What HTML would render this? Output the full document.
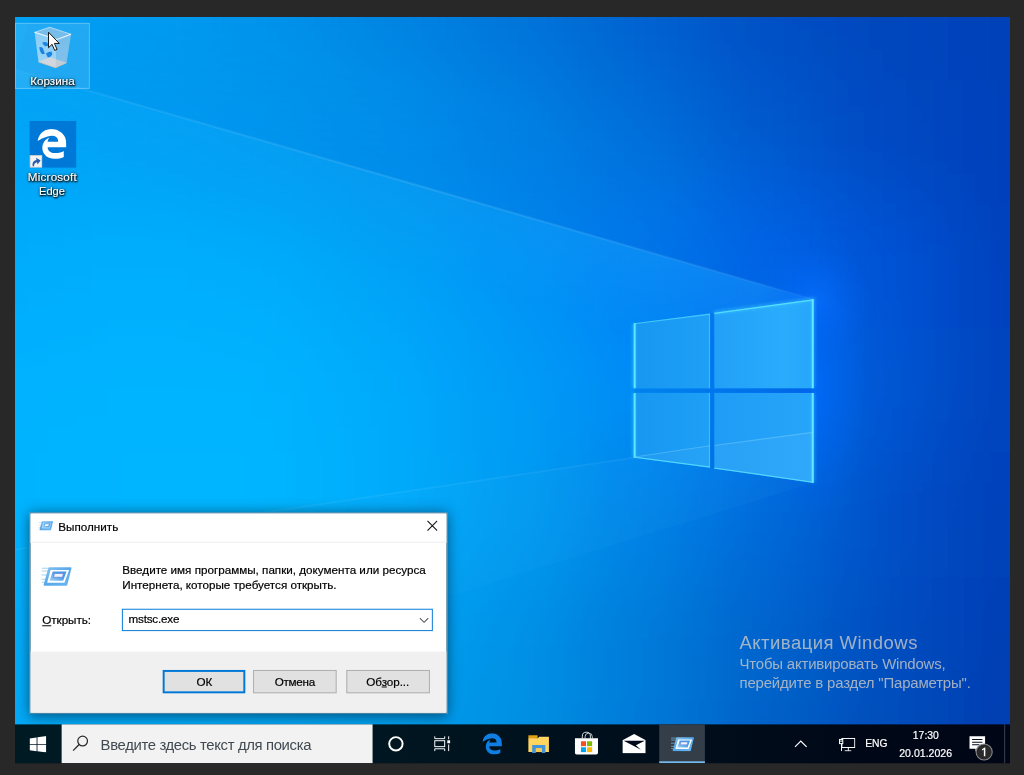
<!DOCTYPE html>
<html lang="ru">
<head>
<meta charset="utf-8">
<title>Desktop</title>
<style>
*{box-sizing:border-box;margin:0;padding:0}
html,body{width:1024px;height:775px;overflow:hidden;background:#282828}
body{font-family:"Liberation Sans",sans-serif;font-size:12px;color:#000;position:relative}
#screen{position:absolute;left:14.5px;top:17px;width:1024px;height:767.74px;transform:scale(0.97168);transform-origin:0 0;overflow:hidden;background:#000a18}
#wall{position:absolute;left:0;top:0;width:1024px;height:768px;clip-path:inset(0 0 38px 0)}
.abs{position:absolute}
.nw{white-space:nowrap}
/* desktop icons */
.sel{position:absolute;left:-0.2px;top:5.6px;width:77.3px;height:68.4px;background:rgba(255,255,255,.13);border:1px solid rgba(255,255,255,.28)}
.dlabel{-webkit-text-stroke:.15px #fff;position:absolute;left:-11.5px;width:100px;text-align:center;color:#fff;font-size:12px;line-height:15px;text-shadow:0 1px 2px rgba(0,0,0,.95),1px 1px 2px rgba(0,0,0,.9),0 0 3px rgba(0,0,0,.7)}
/* watermark */
.wm{position:absolute;left:745.6px;color:rgba(198,198,198,.82);white-space:nowrap}
/* dialog */
#dlg{-webkit-text-stroke:.2px #000;position:absolute;left:14.6px;top:509.5px;width:430px;height:207px;background:#fff;border:1px solid #1d5f86;box-shadow:0 0 14px 1px rgba(0,0,0,.38),0 4px 10px rgba(0,0,0,.18)}
#dlg .tbar{position:absolute;left:0;top:0;width:428px;height:30px;background:#fff;border-bottom:1px solid #ececec}
#dlg .foot{position:absolute;left:0;top:142.5px;width:428px;height:62.5px;background:#f0f0f0}
.btn{position:absolute;top:161.5px;width:86px;height:23.5px;background:#e1e1e1;border:1px solid #adadad;text-align:center;line-height:22.4px;font-size:12px}
.btn.def{border:2px solid #0078d7;line-height:20.4px}
/* taskbar */
#tb{position:absolute;left:0;top:728px;width:1024px;height:40px;background:linear-gradient(90deg,#001a24 0%,#001620 38%,#000f1c 60%,#000c1a 73%,#000717 88%,#000616 100%)}
#tb .t{-webkit-text-stroke:.22px #fff;position:absolute;color:#fff;white-space:nowrap;font-size:12px;line-height:14px}
</style>
</head>
<body>
<div id="screen">

<!-- ================= WALLPAPER ================= -->
<svg id="wall" viewBox="0 0 1024 768">
<defs>
<filter id="mb" x="-10%" y="-10%" width="120%" height="120%"><feGaussianBlur stdDeviation="46"/></filter>
<filter id="b8"><feGaussianBlur stdDeviation="8"/></filter>
<filter id="b3"><feGaussianBlur stdDeviation="3"/></filter>
<filter id="b1"><feGaussianBlur stdDeviation="0.6"/></filter>
<radialGradient id="glow" cx="0.5" cy="0.5" r="0.5">
<stop offset="0" stop-color="#0068ff" stop-opacity=".6"/>
<stop offset=".5" stop-color="#0064f8" stop-opacity=".3"/>
<stop offset="1" stop-color="#0460f0" stop-opacity="0"/>
</radialGradient>
<linearGradient id="pane" x1="0" y1="0" x2="1" y2="0">
<stop offset="0" stop-color="#199bf3"/><stop offset="1" stop-color="#2aa8fb"/>
</linearGradient>
<radialGradient id="glow2" cx="0.5" cy="0.5" r="0.5">
<stop offset="0" stop-color="#0870ff" stop-opacity=".7"/><stop offset=".5" stop-color="#0468fa" stop-opacity=".35"/><stop offset="1" stop-color="#0464f0" stop-opacity="0"/>
</radialGradient>
<linearGradient id="beamfill" gradientUnits="userSpaceOnUse" x1="0" y1="0" x2="822" y2="0">
<stop offset="0" stop-color="#30c0ff" stop-opacity=".03"/><stop offset=".6" stop-color="#30b8ff" stop-opacity=".08"/><stop offset="1" stop-color="#30b8ff" stop-opacity=".10"/>
</linearGradient>
<linearGradient id="beamline" gradientUnits="userSpaceOnUse" x1="0" y1="0" x2="822" y2="0">
<stop offset="0" stop-color="#b0e4ff" stop-opacity=".04"/><stop offset=".12" stop-color="#b0e4ff" stop-opacity=".1"/><stop offset=".5" stop-color="#b0e4ff" stop-opacity=".15"/><stop offset=".85" stop-color="#b0e4ff" stop-opacity=".10"/><stop offset="1" stop-color="#c0f0ff" stop-opacity=".04"/>
</linearGradient>
<linearGradient id="gx" gradientUnits="userSpaceOnUse" x1="0" y1="0" x2="822" y2="0"><stop offset="0" stop-color="#fff" stop-opacity=".2"/><stop offset=".6" stop-color="#fff" stop-opacity=".5"/><stop offset="1" stop-color="#fff" stop-opacity="1"/></linearGradient>
<mask id="mx" maskUnits="userSpaceOnUse" x="-50" y="-50" width="1124" height="868"><rect x="-50" y="-50" width="1124" height="868" fill="url(#gx)"/></mask>
<linearGradient id="gx2" gradientUnits="userSpaceOnUse" x1="0" y1="0" x2="900" y2="0"><stop offset="0" stop-color="#fff" stop-opacity=".2"/><stop offset=".55" stop-color="#fff" stop-opacity=".5"/><stop offset=".84" stop-color="#fff" stop-opacity="1"/><stop offset=".915" stop-color="#fff" stop-opacity=".45"/><stop offset="1" stop-color="#fff" stop-opacity="0"/></linearGradient>
<mask id="mx2" maskUnits="userSpaceOnUse" x="-50" y="-50" width="1124" height="868"><rect x="-50" y="-50" width="1124" height="868" fill="url(#gx2)"/></mask>
<linearGradient id="gbelow" gradientUnits="userSpaceOnUse" x1="0" y1="54" x2="-24.9" y2="140.5"><stop offset="0" stop-color="#28b0ff" stop-opacity=".35"/><stop offset="1" stop-color="#28b0ff" stop-opacity="0"/></linearGradient>
<linearGradient id="gabove" gradientUnits="userSpaceOnUse" x1="0" y1="54" x2="24.9" y2="-32.5"><stop offset="0" stop-color="#0058d0" stop-opacity=".3"/><stop offset="1" stop-color="#0058d0" stop-opacity="0"/></linearGradient>
<linearGradient id="paneTL" x1="0" y1="0" x2="1" y2="0"><stop offset="0" stop-color="#1797f1"/><stop offset="1" stop-color="#1fa0f6"/></linearGradient>
<linearGradient id="paneTR" x1="0" y1="0" x2="1" y2="0"><stop offset="0" stop-color="#22a0f8"/><stop offset=".7" stop-color="#2aacfc"/><stop offset="1" stop-color="#26a6fb"/></linearGradient>
<linearGradient id="paneBR" x1="0" y1="0" x2="1" y2="0"><stop offset="0" stop-color="#1f9df6"/><stop offset="1" stop-color="#27a5fa"/></linearGradient>
<filter id="b2"><feGaussianBlur stdDeviation="1.6"/></filter>
<clipPath id="cw"><rect x="0" y="0" width="1024" height="768"/></clipPath>
</defs>
<g clip-path="url(#cw)">
<g filter="url(#mb)">
<rect x="-192" y="-192" width="129" height="129" fill="rgb(0,160,244)"/>
<rect x="-64" y="-192" width="129" height="129" fill="rgb(0,160,244)"/>
<rect x="64" y="-192" width="129" height="129" fill="rgb(0,155,241)"/>
<rect x="192" y="-192" width="129" height="129" fill="rgb(0,146,234)"/>
<rect x="320" y="-192" width="129" height="129" fill="rgb(0,132,226)"/>
<rect x="448" y="-192" width="129" height="129" fill="rgb(0,116,218)"/>
<rect x="576" y="-192" width="129" height="129" fill="rgb(1,98,208)"/>
<rect x="704" y="-192" width="129" height="129" fill="rgb(3,79,196)"/>
<rect x="832" y="-192" width="129" height="129" fill="rgb(3,70,189)"/>
<rect x="960" y="-192" width="129" height="129" fill="rgb(3,63,183)"/>
<rect x="1088" y="-192" width="129" height="129" fill="rgb(3,63,183)"/>
<rect x="-192" y="-64" width="129" height="129" fill="rgb(0,160,244)"/>
<rect x="-64" y="-64" width="129" height="129" fill="rgb(0,160,244)"/>
<rect x="64" y="-64" width="129" height="129" fill="rgb(0,155,241)"/>
<rect x="192" y="-64" width="129" height="129" fill="rgb(0,146,234)"/>
<rect x="320" y="-64" width="129" height="129" fill="rgb(0,132,226)"/>
<rect x="448" y="-64" width="129" height="129" fill="rgb(0,116,218)"/>
<rect x="576" y="-64" width="129" height="129" fill="rgb(1,98,208)"/>
<rect x="704" y="-64" width="129" height="129" fill="rgb(3,79,196)"/>
<rect x="832" y="-64" width="129" height="129" fill="rgb(3,70,189)"/>
<rect x="960" y="-64" width="129" height="129" fill="rgb(3,63,183)"/>
<rect x="1088" y="-64" width="129" height="129" fill="rgb(3,63,183)"/>
<rect x="-192" y="64" width="129" height="129" fill="rgb(0,166,247)"/>
<rect x="-64" y="64" width="129" height="129" fill="rgb(0,166,247)"/>
<rect x="64" y="64" width="129" height="129" fill="rgb(0,162,246)"/>
<rect x="192" y="64" width="129" height="129" fill="rgb(0,156,242)"/>
<rect x="320" y="64" width="129" height="129" fill="rgb(0,146,237)"/>
<rect x="448" y="64" width="129" height="129" fill="rgb(1,130,228)"/>
<rect x="576" y="64" width="129" height="129" fill="rgb(2,111,218)"/>
<rect x="704" y="64" width="129" height="129" fill="rgb(3,90,206)"/>
<rect x="832" y="64" width="129" height="129" fill="rgb(3,73,194)"/>
<rect x="960" y="64" width="129" height="129" fill="rgb(3,63,186)"/>
<rect x="1088" y="64" width="129" height="129" fill="rgb(3,63,186)"/>
<rect x="-192" y="192" width="129" height="129" fill="rgb(0,172,252)"/>
<rect x="-64" y="192" width="129" height="129" fill="rgb(0,172,252)"/>
<rect x="64" y="192" width="129" height="129" fill="rgb(0,175,254)"/>
<rect x="192" y="192" width="129" height="129" fill="rgb(0,172,252)"/>
<rect x="320" y="192" width="129" height="129" fill="rgb(1,163,247)"/>
<rect x="448" y="192" width="129" height="129" fill="rgb(0,148,247)"/>
<rect x="576" y="192" width="129" height="129" fill="rgb(0,130,244)"/>
<rect x="704" y="192" width="129" height="129" fill="rgb(1,102,236)"/>
<rect x="832" y="192" width="129" height="129" fill="rgb(3,82,214)"/>
<rect x="960" y="192" width="129" height="129" fill="rgb(3,65,188)"/>
<rect x="1088" y="192" width="129" height="129" fill="rgb(3,65,188)"/>
<rect x="-192" y="320" width="129" height="129" fill="rgb(0,178,255)"/>
<rect x="-64" y="320" width="129" height="129" fill="rgb(0,178,255)"/>
<rect x="64" y="320" width="129" height="129" fill="rgb(0,180,255)"/>
<rect x="192" y="320" width="129" height="129" fill="rgb(0,180,255)"/>
<rect x="320" y="320" width="129" height="129" fill="rgb(1,170,252)"/>
<rect x="448" y="320" width="129" height="129" fill="rgb(0,156,246)"/>
<rect x="576" y="320" width="129" height="129" fill="rgb(0,140,246)"/>
<rect x="704" y="320" width="129" height="129" fill="rgb(0,120,246)"/>
<rect x="832" y="320" width="129" height="129" fill="rgb(3,84,210)"/>
<rect x="960" y="320" width="129" height="129" fill="rgb(3,66,188)"/>
<rect x="1088" y="320" width="129" height="129" fill="rgb(3,66,188)"/>
<rect x="-192" y="448" width="129" height="129" fill="rgb(0,180,255)"/>
<rect x="-64" y="448" width="129" height="129" fill="rgb(0,180,255)"/>
<rect x="64" y="448" width="129" height="129" fill="rgb(0,182,255)"/>
<rect x="192" y="448" width="129" height="129" fill="rgb(0,182,255)"/>
<rect x="320" y="448" width="129" height="129" fill="rgb(1,172,252)"/>
<rect x="448" y="448" width="129" height="129" fill="rgb(0,156,242)"/>
<rect x="576" y="448" width="129" height="129" fill="rgb(1,132,230)"/>
<rect x="704" y="448" width="129" height="129" fill="rgb(2,106,218)"/>
<rect x="832" y="448" width="129" height="129" fill="rgb(3,80,200)"/>
<rect x="960" y="448" width="129" height="129" fill="rgb(3,64,184)"/>
<rect x="1088" y="448" width="129" height="129" fill="rgb(3,64,184)"/>
<rect x="-192" y="576" width="129" height="129" fill="rgb(0,172,250)"/>
<rect x="-64" y="576" width="129" height="129" fill="rgb(0,172,250)"/>
<rect x="64" y="576" width="129" height="129" fill="rgb(0,172,250)"/>
<rect x="192" y="576" width="129" height="129" fill="rgb(0,170,248)"/>
<rect x="320" y="576" width="129" height="129" fill="rgb(0,162,242)"/>
<rect x="448" y="576" width="129" height="129" fill="rgb(0,146,230)"/>
<rect x="576" y="576" width="129" height="129" fill="rgb(2,124,218)"/>
<rect x="704" y="576" width="129" height="129" fill="rgb(3,100,204)"/>
<rect x="832" y="576" width="129" height="129" fill="rgb(3,78,192)"/>
<rect x="960" y="576" width="129" height="129" fill="rgb(3,62,180)"/>
<rect x="1088" y="576" width="129" height="129" fill="rgb(3,62,180)"/>
<rect x="-192" y="704" width="129" height="129" fill="rgb(0,165,244)"/>
<rect x="-64" y="704" width="129" height="129" fill="rgb(0,165,244)"/>
<rect x="64" y="704" width="129" height="129" fill="rgb(0,165,244)"/>
<rect x="192" y="704" width="129" height="129" fill="rgb(0,162,240)"/>
<rect x="320" y="704" width="129" height="129" fill="rgb(0,156,234)"/>
<rect x="448" y="704" width="129" height="129" fill="rgb(0,145,226)"/>
<rect x="576" y="704" width="129" height="129" fill="rgb(2,122,216)"/>
<rect x="704" y="704" width="129" height="129" fill="rgb(3,98,200)"/>
<rect x="832" y="704" width="129" height="129" fill="rgb(3,78,186)"/>
<rect x="960" y="704" width="129" height="129" fill="rgb(3,60,176)"/>
<rect x="1088" y="704" width="129" height="129" fill="rgb(3,60,176)"/>
<rect x="-192" y="832" width="129" height="129" fill="rgb(0,165,244)"/>
<rect x="-64" y="832" width="129" height="129" fill="rgb(0,165,244)"/>
<rect x="64" y="832" width="129" height="129" fill="rgb(0,165,244)"/>
<rect x="192" y="832" width="129" height="129" fill="rgb(0,162,240)"/>
<rect x="320" y="832" width="129" height="129" fill="rgb(0,156,234)"/>
<rect x="448" y="832" width="129" height="129" fill="rgb(0,145,226)"/>
<rect x="576" y="832" width="129" height="129" fill="rgb(2,122,216)"/>
<rect x="704" y="832" width="129" height="129" fill="rgb(3,98,200)"/>
<rect x="832" y="832" width="129" height="129" fill="rgb(3,78,186)"/>
<rect x="960" y="832" width="129" height="129" fill="rgb(3,60,176)"/>
<rect x="1088" y="832" width="129" height="129" fill="rgb(3,60,176)"/>
</g>
<!-- glow around window -->
<ellipse cx="824" cy="385" rx="52" ry="135" fill="url(#glow)"/>
<!-- beams -->
<g mask="url(#mx)">
<polygon points="0,54 821.7,290.5 796.8,377 -24.9,140.5" fill="url(#gbelow)"/>
</g>
<g mask="url(#mx2)">
<polygon points="0,54 898.6,312.6 923.5,226.1 24.9,-32.5" fill="url(#gabove)"/>
</g>
<circle cx="822" cy="292" r="58" fill="url(#glow2)"/>
<polygon points="821.7,479.4 637,453.5 0,548 0,735" fill="#40c0ff" opacity=".06"/>
<line x1="821.7" y1="290.5" x2="0" y2="54" stroke="url(#beamline)" stroke-width="2.2" filter="url(#b1)"/>
<line x1="637" y1="453.5" x2="0" y2="548" stroke="#9fe0ff" stroke-opacity=".09" stroke-width="2" filter="url(#b1)"/>
<!-- window panes -->
<g>
<polygon points="719.7,304.4 821.7,290.5 821.7,382.1 719.7,382.1" fill="url(#paneTR)"/>
<polygon points="637.1,315.2 715.3,305.2 715.3,382.1 637.1,382.1" fill="url(#paneTL)"/>
<polygon points="637.1,387 715.3,387 715.3,463.8 637.1,453.5" fill="url(#paneTL)"/>
<polygon points="719.7,387 821.7,387 821.7,479.4 719.7,464.7" fill="url(#paneBR)"/>
<polygon points="637.1,453.5 715.3,441.3 715.3,463.8" fill="#fff" opacity=".035"/>
<polygon points="719.7,441 821.7,427.4 821.7,479.4 719.7,464.7" fill="#fff" opacity=".045"/>
<path d="M637.6 452.8 L715.3 441.2 M719.7 441 L821 427.5" stroke="#9fe4ff" stroke-width="1.1" opacity=".32" fill="none"/>
<g fill="none" stroke="#4fe0ff" stroke-width="4" opacity=".32" filter="url(#b2)">
<path d="M637.1 382.1 V315.2 M719.7 304.4 L821.7 290.5 V382.1 M637.1 387 V453.5 M821.7 479.4 V387"/>
</g>
<g fill="none" stroke="#62ecff" stroke-linejoin="miter">
<path d="M637.7 382.1 V315.2 M821 290.6 V382.1 M637.7 387 V453.4 M821 479.3 V387" stroke-width="2.1" opacity=".92"/>
<path d="M637.1 315.7 L715.3 305.8" stroke-width="1.1" opacity=".55"/><path d="M719.7 305 L821.7 291.1" stroke-width="1.3" opacity=".75"/>
<path d="M637.1 453 L715.3 463.3 M719.7 464.2 L821.7 478.9" stroke-width="1.3" opacity=".7"/>
</g>
<g fill="none" stroke="#8fdcff" stroke-width="1.1" opacity=".4">
<path d="M714.7 306 V382 M714.7 387 V463.2"/>
</g>
<path d="M717.5 305 V464.4 M637.6 384.55 H821" stroke="#0060d0" stroke-width="3.4" opacity=".22" fill="none"/>

</g>
</g>
</svg>

<!-- ================= DESKTOP ICONS ================= -->
<div class="sel"></div>
<!-- recycle bin -->
<svg class="abs" style="left:19px;top:9px" width="42" height="46" viewBox="-1 -1 42 46">
<defs>
<linearGradient id="bl" x1="0" y1="0" x2="0" y2="1"><stop offset="0" stop-color="#cfe6f8" stop-opacity=".6"/><stop offset="1" stop-color="#d6e9f8" stop-opacity=".7"/></linearGradient>
<linearGradient id="br" x1="0" y1="0" x2="0" y2="1"><stop offset="0" stop-color="#a3c9e8" stop-opacity=".66"/><stop offset="1" stop-color="#a9cbe6" stop-opacity=".72"/></linearGradient>
</defs>
<polygon points="0.2,5.8 15.8,0.5 37.7,7.8 23.1,13.1" fill="#8fc2e6" fill-opacity=".8"/>
<polygon points="4.2,36.3 15.8,31.3 33.1,37 21.8,42.3" fill="#cfcfd3"/>
<polygon points="0.2,5.8 23.1,13.1 21.8,42.3 4.2,36.3" fill="url(#bl)"/>
<polygon points="23.1,13.1 37.7,7.8 33.1,37 21.8,42.3" fill="url(#br)"/>
<polygon points="4.2,36.3 15.8,31.3 33.1,37 21.8,42.3" fill="#cdcdd0" opacity=".5"/>
<polyline points="4.2,36.3 21.8,42.3 33.1,37" fill="none" stroke="#c9b9a8" stroke-width=".8" stroke-opacity=".8"/>
<polyline points="0.2,5.8 15.8,0.5 37.7,7.8" fill="none" stroke="#eaf6ff" stroke-width=".8" stroke-opacity=".75"/>
<polyline points="0.2,5.8 23.1,13.1 37.7,7.8" fill="none" stroke="#f6fcff" stroke-width="1.1" stroke-opacity=".95"/>
<g fill="#1a84e2">
<path d="M8 16.6 q2.2 -1.6 5.4 -.2 l1 3.2 l-3.2 .4 q-2 -.6 -3.2 -3.4z"/>
<path d="M5.2 21 q1.8 -.4 3.4 .8 l2.2 6 l-2.8 .6 q-3 -3 -2.8 -7.4z"/>
<path d="M12 27.4 q2.6 -2 5.6 -2 l.8 3.2 q-1.400 2.600 -4.600 3.200 q-1.4 -2 -1.8 -4.400z"/>
</g>
</svg>
<div class="dlabel nw" style="top:59px">Корзина</div>
<!-- mouse cursor -->
<svg class="abs" style="left:33.2px;top:14.4px" width="15" height="22" viewBox="-1 -1 15 22">
<path d="M0.5 0.7 L0.5 16.6 L4.1 13.1 L6.9 19.4 L9.3 18.3 L6.5 12.2 L11.6 12.2 Z" fill="#fff" stroke="#111" stroke-width="1" stroke-linejoin="miter"/>
</svg>
<!-- Edge -->
<div class="abs" style="left:14.8px;top:106.8px;width:48px;height:48px;background:#0078d7"></div>
<svg class="abs" style="left:23.2px;top:115.2px" width="30" height="31" viewBox="0.3 0.2 21.9 23.9" preserveAspectRatio="none">
<path fill="#fff" d="M.481 10.004c.5-4.038 3.199-9.4 10.25-9.646 4.262.082 7.767 2.013 9.852 5.69 1.047 1.918 1.373 3.932 1.442 6.156v2.611H8.037c.065 5.767 8.484 5.57 12.11 3.03v4.696c-2.123 1.274-6.94 2.413-10.67.949-3.176-1.193-5.438-4.519-5.426-7.786-.104-4.238 2.108-7.045 5.426-8.583-.703.872-1.238 1.823-1.517 3.467h7.963s.466-4.757-4.507-4.757C6.73 6.016 2.08 8.9.481 10.004z"/>
</svg>
<!-- shortcut overlay -->
<svg class="abs" style="left:14.8px;top:141.7px" width="13.2" height="13.2" viewBox="0 0 13 13">
<rect x="0" y="0" width="13" height="13" fill="#f4f4f4"/><rect x=".5" y=".5" width="12" height="12" fill="none" stroke="#c9c9c9"/>
<path d="M3.2 11.4 C2.4 8 4 5.4 7 5 L6.6 2.8 L11.2 5.6 L8 9.6 L7.6 7.4 C5.6 7.8 4.4 9 4.6 11.4Z" fill="#2a5db0"/>
</svg>
<div class="dlabel" style="top:158.2px;line-height:14.1px"><span style="letter-spacing:.2px">Microsoft</span><br><span style="display:inline-block;transform:scaleX(.95)">Edge</span></div>


<!-- ================= WATERMARK ================= -->
<div class="wm" style="top:632.8px;font-size:19px;line-height:22px;letter-spacing:.5px">Активация Windows</div>
<div class="wm" style="top:656.5px;font-size:15.4px;line-height:18px;letter-spacing:-.19px">Чтобы активировать Windows,</div>
<div class="wm" style="top:677.2px;font-size:15.4px;line-height:18px;letter-spacing:-.18px">перейдите в раздел "Параметры".</div>


<!-- ================= RUN DIALOG ================= -->
<svg width="0" height="0" style="position:absolute">
<defs>
<linearGradient id="rg1" x1="0" y1="0" x2="1" y2="1"><stop offset="0" stop-color="#8cc6f3"/><stop offset=".5" stop-color="#56a8ea"/><stop offset="1" stop-color="#6cb8f4"/></linearGradient>
<linearGradient id="rg2" x1="0" y1="1" x2="1" y2="0"><stop offset="0" stop-color="#a5d4f7"/><stop offset=".55" stop-color="#4b9fe8"/><stop offset="1" stop-color="#3f97e4"/></linearGradient>
<symbol id="runico" viewBox="0 0 32 20">
<g stroke="#8fc7f2" stroke-width="1.1" stroke-linecap="round" opacity=".8">
<line x1=".8" y1="1.4" x2="7.2" y2="1.4"/><line x1=".8" y1="4.1" x2="6.4" y2="4.1"/><line x1=".5" y1="8.3" x2="5.3" y2="8.3"/><line x1=".8" y1="12.6" x2="4.1" y2="12.6"/><line x1="1" y1="15.8" x2="2.8" y2="15.8"/>
</g>
<path d="M8.3 .3 H30.3 Q31.4 .3 31.1 1.4 L26.9 18.3 Q26.6 19.2 25.6 19.2 H3.3 Q2.2 19.2 2.5 18.1 L7.2 1.2 Q7.5 .3 8.3 .3Z" fill="url(#rg1)"/>
<polygon points="9.6,3.2 28.7,3.2 23.9,16.2 6.1,16.2" fill="#fff"/>
<polygon points="11.9,4.6 26,4.6 22.6,14.3 8.5,14.3" fill="url(#rg2)"/>
<polygon points="13.6,6.7 22.8,6.7 21.9,10.6 12.7,10.6" fill="#eef5fd" stroke="#6f78d6" stroke-width=".7" stroke-linejoin="round"/>
</symbol>
<symbol id="runico_s" viewBox="0 0 32 20">
<g stroke="#a9d3f5" stroke-width="1.6" stroke-linecap="round" opacity=".7">
<line x1="1" y1="3" x2="7" y2="3"/><line x1=".8" y1="8.3" x2="5.3" y2="8.3"/><line x1="1" y1="13.6" x2="3.8" y2="13.6"/>
</g>
<path d="M8.3 .3 H30.3 Q31.4 .3 31.1 1.4 L26.9 18.3 Q26.6 19.2 25.6 19.2 H3.3 Q2.2 19.2 2.5 18.1 L7.2 1.2 Q7.5 .3 8.3 .3Z" fill="url(#rg1)"/>
<polygon points="10.2,3.6 27.6,3.6 23.6,15.6 6.9,15.6" fill="#fff" opacity=".5"/>
<polygon points="12.4,5 25.4,5 22.4,13.6 9.4,13.6" fill="url(#rg2)"/>
<polygon points="14.2,7 22.2,7 21.4,10.4 13.4,10.4" fill="#f4f9ff"/>
</symbol>
</defs>
</svg>
<div id="dlg">
 <div class="tbar"></div>
 <svg class="abs" style="left:8.2px;top:7.8px" width="15.6" height="11.2"><use href="#runico_s" width="15.6" height="11.2"/></svg>
 <div class="abs nw" style="left:29px;top:7.4px;line-height:14px">Выполнить</div>
 <svg class="abs" style="left:408px;top:7.7px" width="11" height="11" viewBox="0 0 11 11"><path d="M.5 .5 L10.5 10.5 M10.5 .5 L.5 10.5" stroke="#111" stroke-width="1.1" fill="none"/></svg>
 <svg class="abs" style="left:11.5px;top:55.7px" width="32" height="20"><use href="#runico" width="32" height="20"/></svg>
 <div class="abs nw" style="left:94.8px;top:51.98px;line-height:14px">Введите имя программы, папки, документа или ресурса</div>
 <div class="abs nw" style="left:94.8px;top:67.3px;line-height:14px;letter-spacing:-.01px">Интернета, которые требуется открыть.</div>
 <div class="abs nw" style="left:12.4px;top:103.9px;line-height:14px;letter-spacing:-.02px"><span style="text-decoration:underline">О</span>ткрыть:</div>
 <div class="abs" style="left:94.5px;top:98.5px;width:320px;height:22.6px;border:1px solid #0078d7;background:#fff"></div>
 <div class="abs nw" style="left:101.2px;top:102.6px;line-height:14px;letter-spacing:-.2px">mstsc.exe</div>
 <svg class="abs" style="left:400.8px;top:107.4px" width="10" height="6" viewBox="0 0 10 6"><path d="M.6 .7 L5 5 L9.4 .7" stroke="#555" stroke-width="1.1" fill="none"/></svg>
 <div class="foot"></div>
 <div class="btn def" style="left:136.2px;width:85.4px;padding-left:1px">ОК</div>
 <div class="btn" style="left:229.4px;letter-spacing:-.28px">Отмена</div>
 <div class="btn" style="left:325px;letter-spacing:-.08px">Об<span style="text-decoration:underline">з</span>ор...</div>
</div>


<!-- ================= TASKBAR ================= -->
<div id="tb">
 <!-- start -->
 <svg class="abs" style="left:14.7px;top:11.8px" width="17.7" height="17" viewBox="0 0 16 16" preserveAspectRatio="none"><path fill="#fff" d="M0 2.27 L6.54 1.37 V7.68 H0Z M7.33 1.26 L16 0 V7.61 L7.33 7.68Z M0 8.35 H6.54 V14.72 L0 13.82Z M7.33 8.43 L16 8.47 V16 L7.33 14.78Z"/></svg>
 <!-- search -->
 <div class="abs" style="left:48px;top:0;width:320px;height:40px;background:#f2f2f2"></div>
 <svg class="abs" style="left:59.4px;top:11.3px" width="17" height="17" viewBox="0 0 17 17"><circle cx="10.6" cy="6.2" r="5" fill="none" stroke="#2b2b2b" stroke-width="1.3"/><path d="M7 9.8 L.8 16" stroke="#2b2b2b" stroke-width="1.4" fill="none"/></svg>
 <div class="abs nw" style="left:88.1px;top:11.6px;font-size:15.3px;line-height:18px;color:#414a52;letter-spacing:-.36px">Введите здесь текст для поиска</div>
 <!-- cortana -->
 <svg class="abs" style="left:383px;top:11px" width="18" height="18" viewBox="0 0 18 18"><circle cx="9" cy="9" r="6.9" fill="none" stroke="#fff" stroke-width="2"/></svg>
 <!-- task view -->
 <svg class="abs" style="left:431px;top:11.5px" width="18" height="17" viewBox="0 0 18 17">
 <g fill="none" stroke="#fff" stroke-width="1">
 <path d="M1 .3 V2.7 H11.2 V.3"/><rect x="1" y="4.8" width="10.2" height="6.1"/><path d="M1 15.5 V13.1 H11.2 V15.5"/>
 <path d="M15.3 .3 V3.3 M15.3 8.7 V15.5"/>
 </g><rect x="13.9" y="4.4" width="2.9" height="3" fill="#fff"/>
 </svg>
 <!-- edge -->
 <svg class="abs" style="left:480.5px;top:9.2px" width="20.4" height="22" viewBox="0.3 0.2 21.9 23.9" preserveAspectRatio="none"><path fill="#0f7ee0" d="M.481 10.004c.5-4.038 3.199-9.4 10.25-9.646 4.262.082 7.767 2.013 9.852 5.69 1.047 1.918 1.373 3.932 1.442 6.156v2.611H8.037c.065 5.767 8.484 5.57 12.11 3.03v4.696c-2.123 1.274-6.94 2.413-10.67.949-3.176-1.193-5.438-4.519-5.426-7.786-.104-4.238 2.108-7.045 5.426-8.583-.703.872-1.238 1.823-1.517 3.467h7.963s.466-4.757-4.507-4.757C6.73 6.016 2.08 8.9.481 10.004z"/></svg>
 <!-- explorer -->
 <svg class="abs" style="left:528.4px;top:10.8px" width="21.8" height="18.8" viewBox="0 0 22 19">
 <rect x=".3" y=".2" width="9.6" height="3.6" fill="#e0a013"/><path d="M.3 3.2 H10.2 L11.6 1.8 H21.7 V17.6 H.3Z" fill="#ffd45f"/>
 <path d="M4.3 10.4 H18 V18.6 H14.3 V13.8 H8.1 V18.6 H4.3Z" fill="#3f94dc"/><rect x="8.1" y="13.8" width="6.2" height="3.9" fill="#f6c84e"/>
 </svg>
 <!-- store -->
 <svg class="abs" style="left:576.4px;top:7.4px" width="24.2" height="24.4" viewBox="0 0 24 24">
 <path d="M7.8 7.4 V5 a4.1 4.1 0 0 1 8.2 0 V7.4" fill="none" stroke="#e6e6e6" stroke-width="1"/><path d="M10.6 7.4 V5.6 a3.7 3.7 0 0 1 7.4 0 V7.4" fill="none" stroke="#d0d0d0" stroke-width=".9"/>
 <path d="M.2 7 H23.8 V22 Q23.8 23.8 22 23.8 H2 Q.2 23.8 .2 22Z" fill="#fff"/>
 <rect x="6.4" y="10.2" width="5.2" height="5" fill="#f25022"/><rect x="12.6" y="10.2" width="5.2" height="5" fill="#7fba00"/><rect x="6.4" y="16.3" width="5.2" height="5" fill="#00a4ef"/><rect x="12.6" y="16.3" width="5.2" height="5" fill="#ffb900"/>
 </svg>
 <!-- mail -->
 <svg class="abs" style="left:624.9px;top:9.6px" width="24.4" height="20" viewBox="0 0 24 20">
 <path d="M0 6.4 L12 0 L24 6.4 V19.8 H0Z" fill="#fff"/>
 <path d="M1.2 6.8 H23 L13.8 11.6 L19 16 L1.2 6.8Z" fill="#000a1c"/>
 </svg>
 <!-- run (active) -->
 <div class="abs" style="left:662.6px;top:0;width:47.7px;height:40px;background:#343e48"></div>
 <div class="abs" style="left:662.6px;top:38px;width:47.7px;height:2px;background:#76b9ed"></div>
 <svg class="abs" style="left:674.6px;top:13px" width="24.4" height="15.2"><use href="#runico" width="24.4" height="15.2"/></svg>
 <!-- tray -->
 <svg class="abs" style="left:802.3px;top:16.2px" width="13.4" height="8" viewBox="0 0 13.4 8"><path d="M.7 7.2 L6.7 1.1 L12.7 7.2" fill="none" stroke="#fff" stroke-width="1.25"/></svg>
 <svg class="abs" style="left:848.2px;top:13.6px" width="17" height="14" viewBox="0 0 17 14">
 <g fill="none" stroke="#fff" stroke-width="1"><rect x="3" y=".5" width="13.2" height="9.3"/><path d="M9.6 9.8 V13.2 M5.9 13.2 H12.6"/><rect x=".5" y="1.5" width="3.4" height="4.3" fill="#000a1c"/><path d="M.5 3.2 H3.9 M2.6 5.8 V13.4"/></g>
 </svg>
 <div class="t" style="left:874.6px;top:12px;transform:scaleX(.885);transform-origin:0 0">ENG</div>
 <div class="t" style="left:924.2px;top:3.6px;transform:scaleX(.89);transform-origin:0 0">17:30</div>
 <div class="t" style="left:910.4px;top:22.6px;transform:scaleX(.905);transform-origin:0 0">20.01.2026</div>
 <!-- action center -->
 <svg class="abs" style="left:981.8px;top:11.8px" width="17" height="17" viewBox="0 0 17 17"><path d="M.2 .2 H16.4 V13 H9.5 L6.5 16 V13 H.2Z" fill="#fff"/><path d="M3 3.6 H13.6 M3 6.3 H13.6 M3 9 H10.5" stroke="#000a1c" stroke-width="1.1"/></svg>
 <svg class="abs" style="left:988.3px;top:18.5px" width="19" height="19" viewBox="0 0 19 19"><circle cx="9.4" cy="9.4" r="8.3" fill="#2a2a2c" stroke="#8a8a8c" stroke-width="1.1"/><path d="M7.2 6.6 L9.9 4.9 H10.6 V13.9 H9.1 V6.9 L7.2 8Z" fill="#fff"/></svg>
 <div class="abs" style="left:1017.6px;top:0;width:1.8px;height:40px;background:#3a4150"></div>
</div>


</div>
</body>
</html>
